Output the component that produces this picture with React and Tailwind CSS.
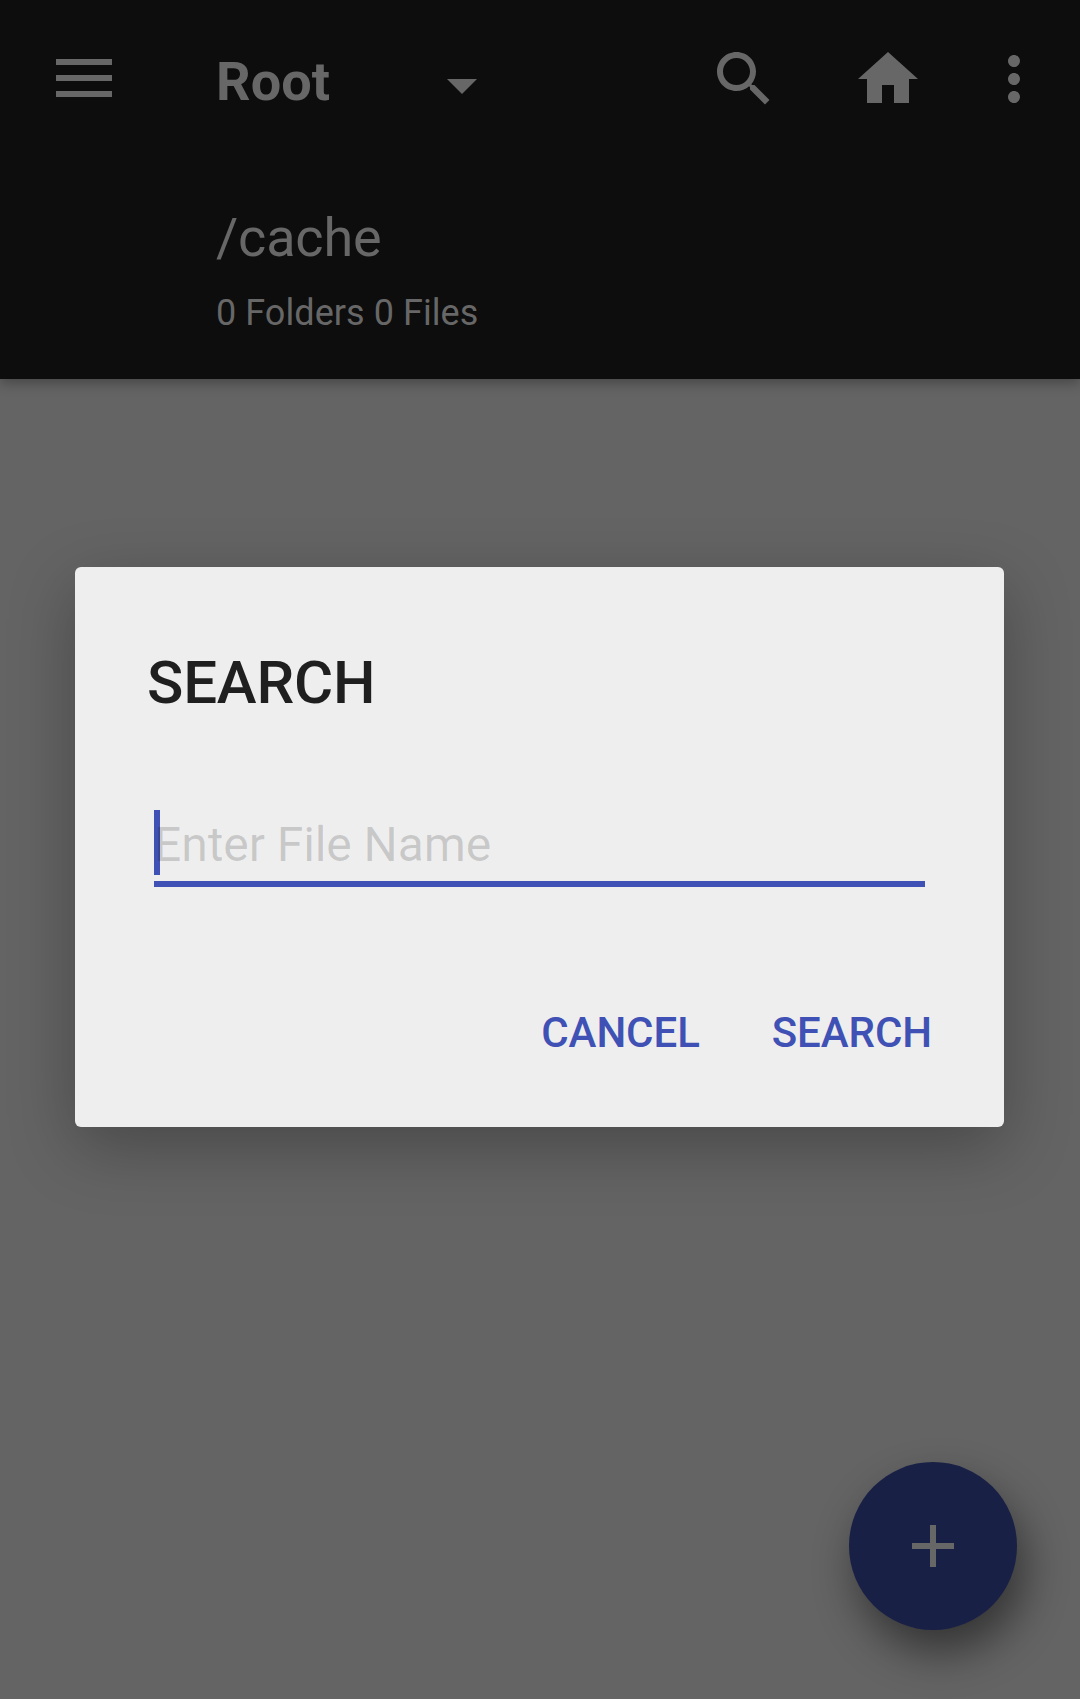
const Icon = ({ d, className = "" }) => (
  <svg viewBox="0 0 24 24" className={"size-[72px] shrink-0 " + className} fill="currentColor" aria-hidden="true">
    <path d={d} />
  </svg>
);

function AppBar() {
  return (
    <header className="h-[379px] shrink-0 bg-[#0d0d0d] text-[#676767] shadow-[0_4px_12px_rgba(0,0,0,0.3)]">
      <div className="flex items-start pl-14 pr-[30px] pt-[43px]">
        <button aria-label="Open menu" className="mt-4 flex w-14 shrink-0 flex-col gap-2.5">
          <span className="h-1.5 bg-[#676767]" />
          <span className="h-1.5 bg-[#676767]" />
          <span className="h-1.5 bg-[#676767]" />
        </button>
        <button className="ml-[104px] mt-[7px] flex h-16 w-[261px] items-center justify-between">
          <span className="text-[54px] font-bold leading-[64px] tracking-[0.1px]">Root</span>
          <svg viewBox="0 0 30 15" className="mt-[9px] h-[15px] w-[30px]" fill="currentColor" aria-hidden="true">
            <path d="M0 0h30L15 15z" />
          </svg>
        </button>
        <div className="ml-auto flex">
          <Icon d="M15.5 14h-.79l-.28-.27C15.41 12.59 16 11.11 16 9.5 16 5.91 13.09 3 9.5 3S3 5.91 3 9.5 5.91 16 9.5 16c1.61 0 3.09-.59 4.23-1.57l.27.28v.79l5 4.99L20.49 19l-4.99-5zm-6 0C7.01 14 5 11.99 5 9.5S7.01 5 9.5 5 14 7.01 14 9.5 11.99 14 9.5 14z" />
          <Icon className="ml-[72px]" d="M10 20v-6h4v6h5v-8h3L12 3 2 12h3v8z" />
          <Icon className="ml-[54px]" d="M12 8c1.1 0 2-.9 2-2s-.9-2-2-2-2 .9-2 2 .9 2 2 2zm0 2c-1.1 0-2 .9-2 2s.9 2 2 2 2-.9 2-2-.9-2-2-2zm0 6c-1.1 0-2 .9-2 2s.9 2 2 2 2-.9 2-2-.9-2-2-2z" />
        </div>
      </div>
      <div className="pl-[216px] pt-[91px]">
        <p className="text-[54px] leading-[64px] tracking-[-0.2px]">/cache</p>
        <p className="mt-[23px] text-[36px] leading-[40px] tracking-[0.06px]">0 Folders 0 Files</p>
      </div>
    </header>
  );
}

function SearchDialog() {
  return (
    <section
      role="dialog"
      className="absolute left-[75px] top-[567px] flex h-[560px] w-[929px] flex-col rounded-md bg-[#eeeeee] pl-[72px] pr-[72px] pt-[84px] shadow-[0_20px_66px_rgba(0,0,0,0.28)]"
    >
      <h2 className="text-[60px] font-medium leading-[64px] tracking-[-0.2px] text-[#1f1f1f]">SEARCH</h2>
      <div className="ml-[7px] mt-[95px] flex h-[77px] w-[771px] items-start border-b-6 border-[#3f51b5]">
        <span className="h-[65px] w-1.5 shrink-0 bg-[#3f51b5]" />
        <span className="-ml-1.5 mt-[3px] text-[48px] leading-[64px] tracking-[-0.07px] text-black/16">Enter File Name</span>
      </div>
      <div className="mt-[114px] flex justify-end gap-[72px] text-[42px] font-medium leading-[64px] tracking-[-0.07px] text-[#3f51b5]">
        <button>CANCEL</button>
        <button>SEARCH</button>
      </div>
    </section>
  );
}

export default function App() {
  return (
    <main className="relative flex h-[1699px] w-[1080px] flex-col overflow-hidden bg-[#646464] font-['Roboto',sans-serif]">
      <AppBar />
      <button
        aria-label="Add"
        className="absolute left-[849px] top-[1462px] flex size-[168px] items-center justify-center rounded-full bg-[#192046] text-[#676767] shadow-[8px_22px_44px_rgba(0,0,0,0.48)]"
      >
        <svg viewBox="0 0 42 42" className="size-[42px]" fill="currentColor" aria-hidden="true">
          <path d="M18 0h6v18h18v6H24v18h-6V24H0v-6h18z" />
        </svg>
      </button>
      <SearchDialog />
    </main>
  );
}
